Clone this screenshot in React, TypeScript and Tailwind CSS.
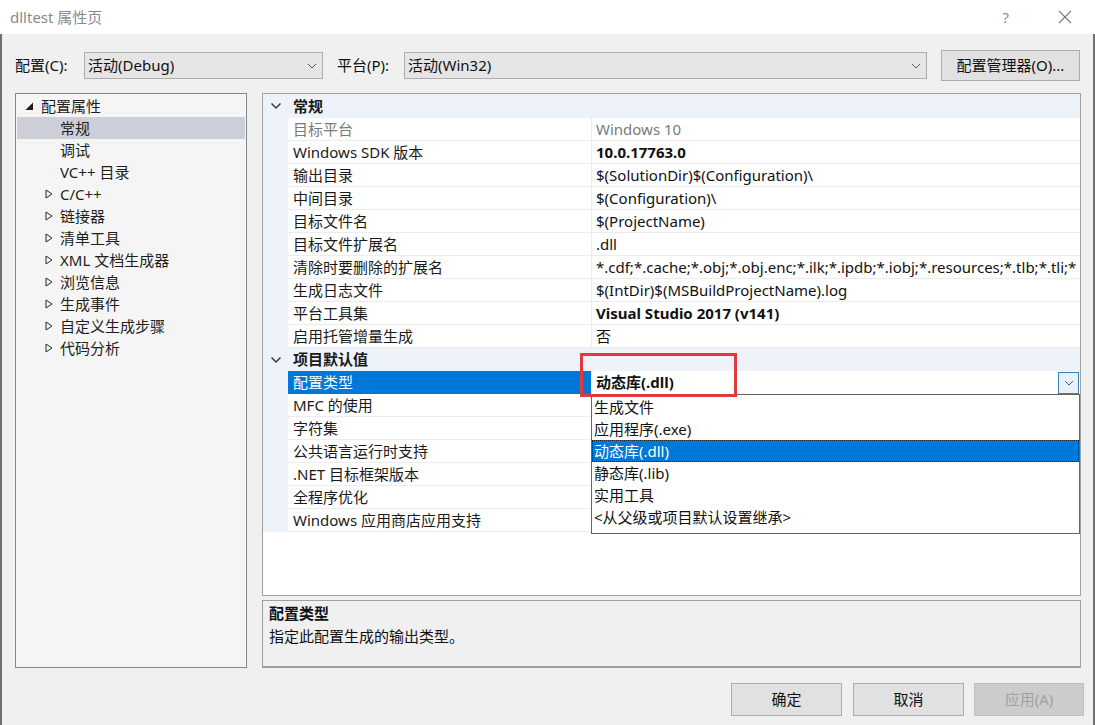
import React from 'react';

const FONT = "font-['Noto_Sans','Noto_Sans_CJK_SC',sans-serif]";

type Prop = { name: string; value?: string; gray?: boolean; bold?: boolean; selected?: boolean };

const general: Prop[] = [
  { name: '目标平台', value: 'Windows 10', gray: true },
  { name: 'Windows SDK 版本', value: '10.0.17763.0', bold: true },
  { name: '输出目录', value: '$(SolutionDir)$(Configuration)\\' },
  { name: '中间目录', value: '$(Configuration)\\' },
  { name: '目标文件名', value: '$(ProjectName)' },
  { name: '目标文件扩展名', value: '.dll' },
  { name: '清除时要删除的扩展名', value: '*.cdf;*.cache;*.obj;*.obj.enc;*.ilk;*.ipdb;*.iobj;*.resources;*.tlb;*.tli;*' },
  { name: '生成日志文件', value: '$(IntDir)$(MSBuildProjectName).log' },
  { name: '平台工具集', value: 'Visual Studio 2017 (v141)', bold: true },
  { name: '启用托管增量生成', value: '否' },
];

const defaults: Prop[] = [
  { name: '配置类型', value: '动态库(.dll)', bold: true, selected: true },
  { name: 'MFC 的使用' },
  { name: '字符集' },
  { name: '公共语言运行时支持' },
  { name: '.NET 目标框架版本' },
  { name: '全程序优化' },
  { name: 'Windows 应用商店应用支持' },
];

const treeItems = ['C/C++', '链接器', '清单工具', 'XML 文档生成器', '浏览信息', '生成事件', '自定义生成步骤', '代码分析'];

const options = ['生成文件', '应用程序(.exe)', '动态库(.dll)', '静态库(.lib)', '实用工具', '<从父级或项目默认设置继承>'];

function SmallChevron({ className = '' }: { className?: string }) {
  return (
    <svg width="10" height="6" viewBox="0 0 10 6" className={className}>
      <path d="M1 1 L5 5 L9 1" fill="none" stroke="#5a5a5a" strokeWidth="1" />
    </svg>
  );
}

function Combo({ text, width }: { text: string; width: string }) {
  return (
    <div className={`${width} h-[27px] flex items-center justify-between bg-[#e5e5e5] border border-[#adadad] pl-[3px] pr-[5px]`}>
      <span className="text-[15px] text-[#111]">{text}</span>
      <SmallChevron />
    </div>
  );
}

function CategoryRow({ label, tall }: { label: string; tall?: boolean }) {
  return (
    <div className={`flex items-center bg-[#eef2f9] ${tall ? 'h-[24px]' : 'h-[23px]'}`}>
      <div className="w-[25px] flex justify-center">
        <svg width="12" height="8" viewBox="0 0 12 8">
          <path d="M1.5 1.5 L6 6 L10.5 1.5" fill="none" stroke="#3a3a3a" strokeWidth="1.5" />
        </svg>
      </div>
      <span className="pl-[5px] text-[15px] font-bold text-[#1a1a1a]">{label}</span>
    </div>
  );
}

function PropRow({ p }: { p: Prop }) {
  return (
    <div className="flex h-[23px]">
      <div className="w-[25px] bg-[#eef2f9]" />
      <div
        className={`w-[304px] shrink-0 flex items-center pl-[5px] border-r border-[#ececec] ${
          p.selected ? 'bg-[#0078d7] text-white' : 'border-b text-[#1a1a1a]'
        } ${p.gray ? 'text-[#7a7a7a]' : ''}`}
      >
        <span className="text-[15px] whitespace-nowrap">{p.name}</span>
      </div>
      <div
        className={`flex-1 min-w-0 flex items-center justify-between pl-[4px] overflow-hidden ${
          p.selected ? 'bg-white pr-[1px]' : 'border-b border-[#ececec]'
        }`}
      >
        <span
          className={`text-[15px] whitespace-nowrap ${p.bold ? 'font-bold' : ''} ${
            p.gray ? 'text-[#7a7a7a]' : 'text-[#111]'
          }`}
        >
          {p.value}
        </span>
        {p.selected && (
          <div className="w-[21px] h-[22px] shrink-0 flex items-center justify-center border border-[#3c7fb1] bg-[#e5f1fb]">
            <SmallChevron />
          </div>
        )}
      </div>
    </div>
  );
}

export default function App() {
  return (
    <div className={`w-[1095px] h-[725px] bg-[#f0f0f0] flex flex-col overflow-hidden ${FONT}`}>
      {/* title bar */}
      <div className="h-[34px] bg-white flex items-center shrink-0">
        <span className="ml-[10px] text-[15px] text-[#8a8a8a]">dlltest 属性页</span>
        <span className="ml-auto text-[15px] text-[#8f8f8f] mr-[49px]">?</span>
        <svg width="14" height="14" viewBox="0 0 14 14" className="mr-[23px]">
          <path d="M1 1 L13 13 M13 1 L1 13" stroke="#7a7a7a" strokeWidth="1.1" />
        </svg>
      </div>

      <div className="flex-1 flex flex-col border-x-2 border-[#707070] pl-[13px] pr-[12px]">
        {/* config row */}
        <div className="mt-[16px] h-[31px] flex items-center">
          <span className="w-[69px] text-[15px] text-[#111]">配置(C):</span>
          <Combo text="活动(Debug)" width="w-[239px]" />
          <span className="ml-[14px] w-[67px] text-[15px] text-[#111]">平台(P):</span>
          <Combo text="活动(Win32)" width="w-[523px]" />
          <button className="ml-[14px] w-[139px] h-[31px] bg-[#e1e1e1] border border-[#adadad] text-[15px] text-[#111]">
            配置管理器(O)...
          </button>
        </div>

        {/* main area */}
        <div className="mt-[12px] h-[575px] flex">
          {/* tree */}
          <div className="w-[232px] h-full border border-[#828790] bg-[#f5f5f5] p-[1px]">
            <div className="h-[22px] flex items-center">
              <svg width="9" height="9" viewBox="0 0 9 9" className="ml-[8px]">
                <polygon points="8,0.5 8,8 0.5,8" fill="#1e1e1e" />
              </svg>
              <span className="ml-[7px] text-[15px] text-[#1e1e1e]">配置属性</span>
            </div>
            <div className="h-[22px] flex items-center bg-[#ccced8]">
              <span className="ml-[43px] text-[15px] text-[#1e1e1e]">常规</span>
            </div>
            <div className="h-[22px] flex items-center">
              <span className="ml-[43px] text-[15px] text-[#1e1e1e]">调试</span>
            </div>
            <div className="h-[22px] flex items-center">
              <span className="ml-[43px] text-[15px] text-[#1e1e1e]">VC++ 目录</span>
            </div>
            {treeItems.map((t) => (
              <div key={t} className="h-[22px] flex items-center">
                <svg width="8" height="10" viewBox="0 0 8 10" className="ml-[28px]">
                  <polygon points="1,1 7,5 1,9" fill="none" stroke="#2a2a2a" strokeWidth="1" />
                </svg>
                <span className="ml-[7px] text-[15px] text-[#1e1e1e]">{t}</span>
              </div>
            ))}
          </div>

          {/* right column */}
          <div className="ml-[15px] w-[819px] flex flex-col">
            <div className="relative h-[503px] border border-[#a0a0a0] bg-white">
              <CategoryRow label="常规" tall />
              {general.map((p) => (
                <PropRow key={p.name} p={p} />
              ))}
              <CategoryRow label="项目默认值" />
              {defaults.map((p) => (
                <PropRow key={p.name} p={p} />
              ))}

              {/* dropdown list */}
              <div className="absolute left-[328px] top-[300px] w-[489px] h-[140px] bg-white border border-[#646464] pt-[1px]">
                {options.map((o, i) => (
                  <div
                    key={o}
                    className={`h-[22px] flex items-center pl-[2px] text-[15px] ${
                      i === 2 ? 'bg-[#0078d7] text-white outline-1 outline-dotted outline-[#222] -outline-offset-1' : 'text-[#111]'
                    }`}
                  >
                    {o}
                  </div>
                ))}
              </div>

              {/* red highlight */}
              <div className="absolute left-[317px] top-[259px] w-[157px] h-[44px] border-[3px] border-[#e0393e]" />
            </div>

            <div className="mt-[4px] h-[68px] border border-b-2 border-[#a0a0a0] bg-[#f0f0f0] pl-[6px] pt-[1px]">
              <div className="h-[22px] flex items-center text-[15px] font-bold text-[#111]">配置类型</div>
              <div className="h-[24px] flex items-center text-[15px] text-[#111]">指定此配置生成的输出类型。</div>
            </div>
          </div>
        </div>

        {/* buttons */}
        <div className="mt-[15px] flex justify-end -mr-[3px]">
          <button className="w-[111px] h-[33px] bg-[#e1e1e1] border border-[#adadad] text-[15px] text-[#111]">确定</button>
          <button className="ml-[11px] w-[111px] h-[33px] bg-[#e1e1e1] border border-[#adadad] text-[15px] text-[#111]">取消</button>
          <button className="ml-[10px] w-[110px] h-[33px] bg-[#cccccc] border border-[#bfbfbf] text-[15px] text-[#a0a0a0]">应用(A)</button>
        </div>
      </div>
    </div>
  );
}
